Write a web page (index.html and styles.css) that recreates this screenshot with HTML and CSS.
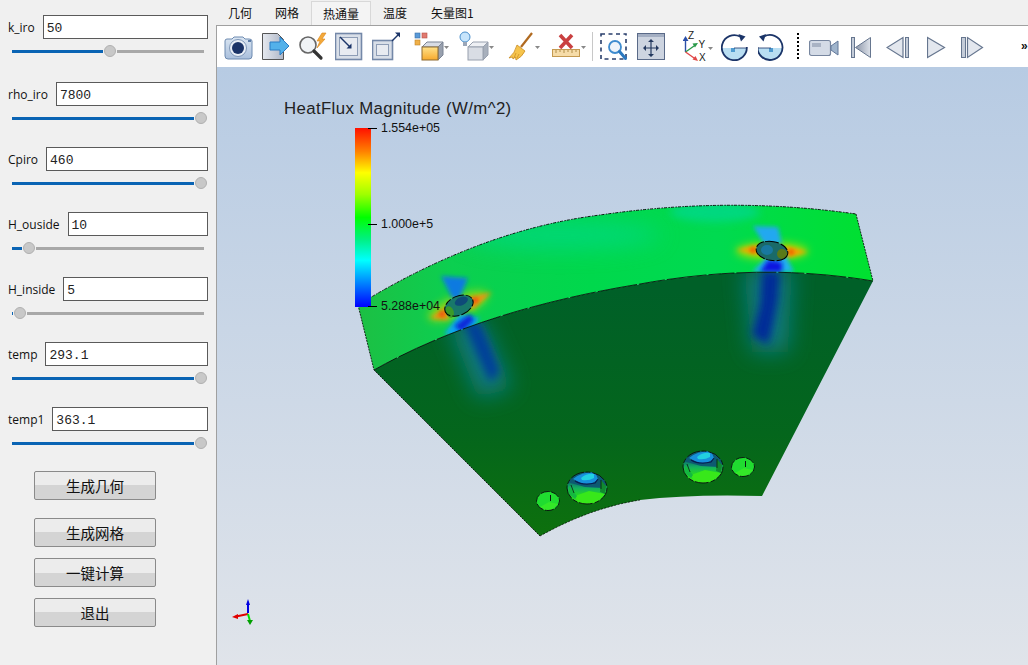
FILE: index.html
```html
<!DOCTYPE html>
<html lang="zh">
<head>
<meta charset="utf-8">
<title>热通量</title>
<link rel="stylesheet" href="styles.css">
</head>
<body>
<div class="app">
  <aside class="panel">
    <div class="group group-first">
      <div class="row"><span class="label">k_iro</span><div class="field">50</div></div>
      <div class="slider"><i class="fill" style="width:91px"></i><i class="thumb"></i><i class="rest"></i></div>
    </div>
    <div class="group">
      <div class="row"><span class="label">rho_iro</span><div class="field">7800</div></div>
      <div class="slider"><i class="fill" style="width:182px"></i><i class="thumb"></i><i class="rest"></i></div>
    </div>
    <div class="group">
      <div class="row"><span class="label">Cpiro</span><div class="field">460</div></div>
      <div class="slider"><i class="fill" style="width:182px"></i><i class="thumb"></i><i class="rest"></i></div>
    </div>
    <div class="group">
      <div class="row"><span class="label">H_ouside</span><div class="field">10</div></div>
      <div class="slider"><i class="fill" style="width:10px"></i><i class="thumb"></i><i class="rest"></i></div>
    </div>
    <div class="group">
      <div class="row"><span class="label">H_inside</span><div class="field">5</div></div>
      <div class="slider"><i class="fill" style="width:1px"></i><i class="thumb"></i><i class="rest"></i></div>
    </div>
    <div class="group">
      <div class="row"><span class="label">temp</span><div class="field">293.1</div></div>
      <div class="slider"><i class="fill" style="width:182px"></i><i class="thumb"></i><i class="rest"></i></div>
    </div>
    <div class="group">
      <div class="row"><span class="label">temp1</span><div class="field">363.1</div></div>
      <div class="slider"><i class="fill" style="width:182px"></i><i class="thumb"></i><i class="rest"></i></div>
    </div>
    <div class="actions">
      <button class="btn btn-wide">生成几何</button>
      <button class="btn">生成网格</button>
      <button class="btn">一键计算</button>
      <button class="btn">退出</button>
    </div>
  </aside>
  <main class="main">
    <nav class="tabs">
      <span class="tab">几何</span>
      <span class="tab">网格</span>
      <span class="tab tab-active">热通量</span>
      <span class="tab">温度</span>
      <span class="tab">矢量图1</span>
    </nav>
    <div class="content">
      <div class="toolbar">
        <svg width="38" height="41" viewBox="0 0 38 41">
          <defs>
            <linearGradient id="gBlue" x1="0" y1="0" x2="0" y2="1"><stop offset="0" stop-color="#dbe6f2"/><stop offset="1" stop-color="#a9bfdc"/></linearGradient>
            <linearGradient id="gGray" x1="0" y1="0" x2="1" y2="0"><stop offset="0" stop-color="#e6e9ef"/><stop offset="1" stop-color="#aeb6c6"/></linearGradient>
            <linearGradient id="gTri" x1="0" y1="0" x2="1" y2="0"><stop offset="0" stop-color="#8d96a8"/><stop offset="1" stop-color="#dde2ea"/></linearGradient>
            <linearGradient id="gOrange" x1="0" y1="0" x2="0" y2="1"><stop offset="0" stop-color="#ffe28a"/><stop offset="1" stop-color="#f7a92c"/></linearGradient>
          </defs>
          <path d="M1 15q0-2 2-2h5l2-2h9l2 2h4q3 0 3 2v15q0 3-3 3H4q-3 0-3-3z" fill="url(#gBlue)" stroke="#6d8ab0"/>
          <circle cx="14" cy="22" r="8.5" fill="#e8eef6" stroke="#7f97b8"/>
          <circle cx="14" cy="22" r="6" fill="#1b3468"/>
          <rect x="24" y="14" width="3" height="2" fill="#5c7ca8"/>
        </svg>
        <svg width="36" height="41" viewBox="0 0 36 41">
          <path d="M.5 7.500h15l6 6v20H.5z" fill="url(#gGray)" stroke="#555"/>
          <path d="M8 16h10v-5l9 9-9 9v-5H8z" fill="#53b1ea" stroke="#2b7cc4"/>
        </svg>
        <svg width="37" height="41" viewBox="0 0 37 41">
          <circle cx="10" cy="19" r="8" fill="#f0f3f6" stroke="#666" stroke-width="1.600"/>
          <path d="M16 25l7 7" stroke="#333" stroke-width="3.200" stroke-linecap="round"/>
          <path d="M24 7l-5 8h3l-3 7 8-9h-3l4-6z" fill="#f4a93a" stroke="#d98518" stroke-width=".6"/>
        </svg>
        <svg width="37" height="41" viewBox="0 0 37 41">
          <rect x=".5" y="7.500" width="26" height="26" fill="#d9dfe8" stroke="#7488a8" stroke-width="1.600"/>
          <rect x="4.500" y="11.500" width="18" height="18" fill="#e8ebf1" stroke="#8e9db6"/>
          <path d="M5 11l10 10" stroke="#1b3468" stroke-width="1.400"/>
          <path d="M16.500 22.500v-5l-5 5z" fill="#1b3468"/>
        </svg>
        <svg width="42" height="41" viewBox="0 0 42 41">
          <rect x=".5" y="14.500" width="20" height="19" fill="#d9dfe8" stroke="#7488a8" stroke-width="1.600"/>
          <rect x="4.500" y="18.500" width="12" height="11" fill="#e8ebf1" stroke="#8e9db6"/>
          <path d="M20 15l6-6" stroke="#1b3468" stroke-width="1.400"/>
          <path d="M28 6.500v5l-5-5z" fill="#1b3468"/>
        </svg>
        <svg width="45" height="41" viewBox="0 0 45 41">
          <rect x="1" y="7" width="5" height="5" fill="#5a9ad8" stroke="#3a70a8" stroke-width=".6"/>
          <rect x="8" y="7" width="5" height="5" fill="#e07a70" stroke="#b85048" stroke-width=".6"/>
          <rect x="1" y="14" width="5" height="5" fill="#f0b048" stroke="#c08428" stroke-width=".6"/>
          <path d="M8 21l5-5h16l-5 5z" fill="#d8dce4" stroke="#7b8494"/>
          <path d="M24 21l5-5v13l-5 5z" fill="#98a0ae" stroke="#7b8494"/>
          <rect x="8" y="21" width="16" height="13" fill="url(#gOrange)" stroke="#8d6a30"/>
          <path d="M30 20h5l-2.500 3z" fill="#888"/>
        </svg>
        <svg width="49" height="41" viewBox="0 0 49 41">
          <circle cx="6" cy="11" r="5" fill="#c6e4fb" stroke="#4a8fcb"/>
          <rect x="4" y="16" width="4" height="4" fill="#9aa6b8"/>
          <path d="M9 21l5-5h15l-5 5z" fill="#eef0f4" stroke="#98a0ae"/>
          <path d="M24 21l5-5v13l-5 5z" fill="#a8b0bc" stroke="#98a0ae"/>
          <rect x="9" y="21" width="15" height="13" fill="#d9dde4" stroke="#98a0ae"/>
          <path d="M30 20h5l-2.500 3z" fill="#888"/>
        </svg>
        <svg width="44" height="41" viewBox="0 0 44 41">
          <path d="M24 7L13 21" stroke="#b06a20" stroke-width="2.200"/>
          <path d="M9 19l8 6q-3 6-9 9l-.5-3-2.500 2-.5-2-3.500 1q6-5 8-13z" fill="#f6c44c" stroke="#c98a1e" stroke-width=".8"/>
          <path d="M8 27l-2 5M11 28l-2 4" stroke="#c98a1e" stroke-width=".7"/>
          <path d="M27 20h5l-2.500 3z" fill="#888"/>
        </svg>
        <svg width="40" height="41" viewBox="0 0 40 41">
          <path d="M8 9l12 13M20 9L8 22" stroke="#c94040" stroke-width="3.600"/>
          <rect x=".5" y="23.500" width="27" height="7" fill="#f6dca8" stroke="#c49a50"/>
          <path d="M4 24v3M8 24v2M12 24v3M16 24v2M20 24v3M24 24v2" stroke="#a07830" stroke-width=".8"/>
          <path d="M29 20h5l-2.500 3z" fill="#888"/>
        </svg>
        <span class="sep"></span>
        <svg width="37" height="41" viewBox="0 0 37 41">
          <rect x="1" y="8" width="25" height="25" fill="none" stroke="#2a3f6c" stroke-width="1.600" stroke-dasharray="4 3.500"/>
          <circle cx="15" cy="21" r="6" fill="#eef4fa" stroke="#3f8ccf" stroke-width="1.800"/>
          <path d="M19.500 25.500l6 7" stroke="#2a78c0" stroke-width="3" stroke-linecap="round"/>
        </svg>
        <svg width="46" height="41" viewBox="0 0 46 41">
          <rect x=".5" y="7.500" width="27" height="26" fill="#cdd4e0" stroke="#5a6a88"/>
          <rect x="1" y="8" width="26" height="3" fill="#a3aec2"/>
          <path d="M14 15v14M8 22h12" stroke="#24395f" stroke-width="1.200"/>
          <path d="M14 13l-3 3h6zM14 31l-3-3h6zM6 22l3-3v6zM22 22l-3-3v6z" fill="#24395f"/>
        </svg>
        <svg width="38" height="41" viewBox="0 0 38 41">
          <path d="M2.500 26V14" stroke="#2a4fa8" stroke-width="1.400"/>
          <path d="M2.500 10l-3 5h6z" fill="#2a4fa8"/>
          <path d="M2.500 26l10-7" stroke="#2a9a48" stroke-width="1.400"/>
          <path d="M15 17l-5.500.5 2.500 4z" fill="#2a9a48"/>
          <path d="M2.500 26l10 7" stroke="#e04848" stroke-width="1.400"/>
          <path d="M15 35l-2.500-5-3 3.500z" fill="#e04848"/>
          <text class="axis-letter" x="5" y="13">Z</text>
          <text class="axis-letter" x="15.500" y="22">Y</text>
          <text class="axis-letter" x="16" y="35">X</text>
          <path d="M25 21h5l-2.500 3z" fill="#888"/>
        </svg>
        <svg width="37" height="41" viewBox="0 0 37 41">
          <path d="M1 22h25a12.500 12.500 0 0 1-25 0z" fill="#b9def2"/>
          <rect x="10" y="22" width="4" height="4" fill="#4f9bd0"/>
          <path d="M19 10.500A12.500 12.500 0 1 0 25.800 21" fill="none" stroke="#1b3468" stroke-width="1.800"/>
          <path d="M17.500 8l7 2.500-4.500 5z" fill="#1b3468"/>
          <path d="M13 22h13" stroke="#1b3468" stroke-width=".8"/>
        </svg>
        <svg width="39" height="41" viewBox="0 0 39 41">
          <path d="M25 22H0a12.500 12.500 0 0 0 25 0z" fill="#b9def2"/>
          <rect x="11" y="22" width="4" height="4" fill="#4f9bd0"/>
          <path d="M6 10.500A12.500 12.500 0 1 1 -.5 21" fill="none" stroke="#1b3468" stroke-width="1.800"/>
          <path d="M8 8L1 10.500l4.500 5z" fill="#1b3468"/>
          <path d="M0 22h13" stroke="#1b3468" stroke-width=".8"/>
        </svg>
        <span class="dots"></span>
        <svg width="42" height="41" viewBox="0 0 42 41">
          <rect x=".5" y="14.500" width="21" height="15" rx="2" fill="#d4dbe6" stroke="#77869f" stroke-width="1.200"/>
          <rect x="3" y="17" width="9" height="4" fill="#a9b3c4"/>
          <path d="M22 20l7-5v14l-7-5z" fill="#9fb4cc" stroke="#62789a"/>
        </svg>
        <svg width="35" height="41" viewBox="0 0 35 41">
          <rect x=".5" y="11.500" width="3" height="20" fill="#c4ccd8" stroke="#66768f"/>
          <path d="M19.500 11.500v20l-15-10z" fill="url(#gTri)" stroke="#66768f"/>
        </svg>
        <svg width="41" height="41" viewBox="0 0 41 41">
          <path d="M17 11.500v20l-16-10z" fill="#e3e7ee" stroke="#66768f" stroke-width="1.200"/>
          <rect x="19.500" y="11.500" width="3" height="20" fill="#c4ccd8" stroke="#66768f"/>
        </svg>
        <svg width="34" height="41" viewBox="0 0 34 41">
          <path d="M.5 11.500v20l17-10z" fill="#e3e7ee" stroke="#66768f" stroke-width="1.200"/>
        </svg>
        <svg width="60" height="41" viewBox="0 0 60 41">
          <rect x=".5" y="11.500" width="4" height="20" fill="#c4ccd8" stroke="#66768f"/>
          <path d="M6.500 11.500v20l15-10z" fill="#e3e7ee" stroke="#66768f" stroke-width="1.200"/>
        </svg>
        <span class="more">»</span>
      </div>
      <div class="viewport">
        <svg class="scene" viewBox="217 67 811 598" width="811" height="598">
          <defs>
            <linearGradient id="rainbow" x1="0" y1="0" x2="0" y2="1">
              <stop offset="0" stop-color="#ff1000"/><stop offset=".13" stop-color="#ff8000"/><stop offset=".25" stop-color="#ffff00"/>
              <stop offset=".37" stop-color="#a0ff00"/><stop offset=".5" stop-color="#00ff00"/><stop offset=".62" stop-color="#00f080"/>
              <stop offset=".74" stop-color="#00ffff"/><stop offset=".87" stop-color="#0080ff"/><stop offset="1" stop-color="#0000ff"/>
            </linearGradient>
            <linearGradient id="band" gradientUnits="userSpaceOnUse" x1="360" y1="0" x2="870" y2="0">
              <stop offset="0" stop-color="#1cc044"/><stop offset=".18" stop-color="#0ccf50"/><stop offset=".45" stop-color="#00d84c"/>
              <stop offset=".7" stop-color="#00da50"/><stop offset="1" stop-color="#00e030"/>
            </linearGradient>
            <linearGradient id="face" gradientUnits="userSpaceOnUse" x1="0" y1="290" x2="0" y2="530">
              <stop offset="0" stop-color="#006028"/><stop offset=".6" stop-color="#04661c"/><stop offset="1" stop-color="#0d700e"/>
            </linearGradient>
            <linearGradient id="holeBody" x1="0" y1="0" x2="0" y2="1">
              <stop offset="0" stop-color="#0f5f6a"/><stop offset=".36" stop-color="#0f7f6a"/><stop offset=".5" stop-color="#14b060"/><stop offset=".68" stop-color="#20d030"/><stop offset="1" stop-color="#3ae814"/>
            </linearGradient>
            <clipPath id="clipBand"><path d="M358 305Q480 230 600 215Q730 196 856 214L873 281Q760 262 640 284Q480 310 374 370z"/></clipPath>
            <clipPath id="clipFace"><path d="M374 370Q480 310 640 284Q760 262 873 281L762 496Q690 494 640 500Q590 508 540 536z"/></clipPath>
            <clipPath id="clipHole"><ellipse cx="0" cy="0" rx="20" ry="16"/></clipPath>
            <filter id="b2" x="-100%" y="-100%" width="300%" height="300%"><feGaussianBlur stdDeviation="2"/></filter>
            <filter id="b3" x="-100%" y="-100%" width="300%" height="300%"><feGaussianBlur stdDeviation="3"/></filter>
            <filter id="b4" x="-100%" y="-100%" width="300%" height="300%"><feGaussianBlur stdDeviation="4"/></filter>
            <filter id="b12" x="-100%" y="-100%" width="300%" height="300%"><feGaussianBlur stdDeviation="11"/></filter>
            <g id="bigHole">
              <ellipse rx="20" ry="16" fill="url(#holeBody)"/>
              <g clip-path="url(#clipHole)">
                <path d="M-20 -6L-14 -16H16L20 -4 16 0 -2 -1z" fill="#0d5a72"/>
                <path d="M-14 -9Q-6 -16 8 -16L11 -9Q6 -3 -4 -4z" fill="#1790dc"/>
                <path d="M-6 -10Q0 -15 7 -14L7 -10Q2 -7 -5 -8z" fill="#22d0e0"/>
                <path d="M-12 -7Q-4 -2 8 -5L11 -9" fill="none" stroke="#081c50" stroke-width="1.200"/>
                <path d="M-12 8L2 3 18 6 8 16H-8z" fill="#38e81a"/>
                <path d="M-18 -2L-10 8-12 11-18 6z" fill="#14b840"/>
                <path d="M14 -8L19 -2 18 6 13 4z" fill="#118a30"/>
              </g>
              <ellipse rx="20" ry="16" fill="none" stroke="#0a1a10" stroke-dasharray="14 1.500 5 2"/>
              <path d="M-16 -3l3 8M14 -8v9" fill="none" stroke="#0a1a10" stroke-width=".8"/>
            </g>
            <g id="smallHole">
              <ellipse rx="11.500" ry="9.500" fill="#20dc30"/>
              <path d="M-8 6L1 1 10 3 4 9H-4z" fill="#34e828"/>
              <ellipse rx="11.500" ry="9.500" fill="none" stroke="#0a1a10" stroke-dasharray="9 1.500"/>
              <path d="M2.500 -6v6" stroke="#0a1a10"/>
            </g>
          </defs>
          <path d="M374 370Q480 310 640 284Q760 262 873 281L762 496Q690 494 640 500Q590 508 540 536z" fill="url(#face)"/>
          <g clip-path="url(#clipFace)">
            <path d="M448 322L482 320 512 388 478 398z" fill="#0a7a80" filter="url(#b12)"/>
            <path d="M463 322L480 322 490 345 500 372 490 382 475 350z" fill="#06409a" filter="url(#b4)"/>
            <path d="M744 270L792 268 788 352 752 352z" fill="#0a7a80" filter="url(#b12)"/>
            <path d="M762 270L780 272 778 300 772 330 768 345 752 335 760 305z" fill="#042c98" filter="url(#b4)"/>
          </g>
          <path d="M358 305Q480 230 600 215Q730 196 856 214L873 281Q760 262 640 284Q480 310 374 370z" fill="url(#band)"/>
          <g clip-path="url(#clipBand)">
            <ellipse cx="560" cy="235" rx="100" ry="15" fill="#00d880" filter="url(#b12)" opacity=".8"/>
            <ellipse cx="715" cy="212" rx="45" ry="10" fill="#00d88c" filter="url(#b4)" opacity=".8"/>
            <ellipse cx="458" cy="306" rx="32" ry="10" fill="#8cd818" filter="url(#b4)" transform="rotate(-22 458 306)"/>
            <ellipse cx="772" cy="251" rx="36" ry="8" fill="#a8e000" filter="url(#b4)"/>
            <path d="M430 318L448 306 448 320z" fill="#f09010" filter="url(#b2)"/>
            <path d="M492 292L468 298 472 310z" fill="#f09010" filter="url(#b2)"/>
            <circle cx="442" cy="314" r="2.500" fill="#e83808" filter="url(#b2)"/>
            <circle cx="475" cy="300" r="2.500" fill="#e83808" filter="url(#b2)"/>
            <path d="M736 250L758 245 758 255z" fill="#f8a000" filter="url(#b2)"/>
            <path d="M808 252L786 246 786 258z" fill="#f8a000" filter="url(#b2)"/>
            <circle cx="753" cy="250" r="2.500" fill="#e84000" filter="url(#b2)"/>
            <circle cx="791" cy="252" r="2.500" fill="#e84000" filter="url(#b2)"/>
            <path d="M441 276L468 278 459 300 452 298z" fill="#107ae0" filter="url(#b2)"/>
            <path d="M444 334L460 314 480 318 466 338z" fill="#10a8f0" filter="url(#b2)"/>
            <path d="M454 326L470 314 474 320 462 332z" fill="#0828d8" filter="url(#b2)"/>
            <path d="M753 226L778 227 782 244 764 244z" fill="#20a8f0" filter="url(#b2)"/>
            <path d="M752 272L768 256 786 256 794 272z" fill="#20b0f0" filter="url(#b2)"/>
            <path d="M760 272L768 260 782 262 782 272z" fill="#0818e0" filter="url(#b2)"/>
          </g>
          <g transform="rotate(-24 458 306)">
            <ellipse cx="459" cy="306" rx="15" ry="9.500" fill="#18786a"/>
            <ellipse cx="448" cy="308" rx="4" ry="6" fill="#3a9a28"/>
            <ellipse cx="463" cy="303" rx="7" ry="4" fill="#0e4a78"/>
            <ellipse cx="459" cy="306" rx="15" ry="9.500" fill="none" stroke="#000" stroke-dasharray="7 2 12 2"/>
          </g>
          <ellipse cx="772" cy="251" rx="16" ry="9.500" fill="#1a6a68" transform="rotate(10 772 251)"/>
          <ellipse cx="767" cy="250" rx="6" ry="5" fill="#1878a0"/>
          <ellipse cx="782" cy="254" rx="5" ry="5" fill="#5a7a18"/>
          <ellipse cx="772" cy="251" rx="16" ry="9.500" fill="none" stroke="#000" stroke-dasharray="14 2 9 1" transform="rotate(10 772 251)"/>
          <path d="M358 305Q480 230 600 215Q730 196 856 214" fill="none" stroke="#000" stroke-width=".9" stroke-dasharray="1.500 1 3 1.500"/>
          <path d="M374 370Q480 310 640 284Q760 262 873 281" fill="none" stroke="#000" stroke-width=".8" stroke-dasharray="26 2 40 2"/>
          <path d="M856 214L873 281M358 305L374 370L540 536" fill="none" stroke="#000" stroke-width=".8" stroke-dasharray="2 1"/>
          <path d="M540 536Q590 508 640 500" fill="none" stroke="#000" stroke-width=".7" stroke-dasharray="2 1.500"/>
          <use href="#bigHole" x="587" y="488"/>
          <use href="#bigHole" x="703" y="467"/>
          <use href="#smallHole" x="548" y="501"/>
          <use href="#smallHole" x="743" y="467"/>
          <rect x="355" y="128" width="16" height="179" fill="url(#rainbow)"/>
          <path d="M368 128.500h9M368 224.500h9M368 306.500h9" stroke="#000"/>
          <text class="bar-title" x="284" y="114">HeatFlux Magnitude (W/m^2)</text>
          <text class="bar-label" x="381" y="132">1.554e+05</text>
          <text class="bar-label" x="381" y="228">1.000e+5</text>
          <text class="bar-label" x="381" y="310">5.288e+04</text>
          <path d="M248 613V603" stroke="#0000e0" stroke-width="2"/>
          <path d="M248 599l-2 6h4z" fill="#0000e0"/>
          <path d="M248 614l-12 2.500" stroke="#e00000" stroke-width="2"/>
          <path d="M232 617l6-3v5z" fill="#e00000"/>
          <path d="M248 614l2 7" stroke="#00e000" stroke-width="2"/>
          <path d="M250 625l-3-5h6z" fill="#00a000"/>
        </svg>
      </div>
    </div>
  </main>
</div>
</body>
</html>
```
FILE: styles.css
```css
html, body { margin: 0; padding: 0; height: 100%; overflow: hidden; background: #f0f0f0; }
.app { display: flex; width: 1028px; height: 665px; }
.panel { width: 216px; flex: none; box-sizing: border-box; padding: 15px 8px 0 8px; }
.group { margin-top: 22px; }
.group-first { margin-top: 0; margin-bottom: 24px; }
.row { display: flex; align-items: center; gap: 8px; height: 24px; }
.label { font: 12px "Open Sans", "Liberation Sans", sans-serif; color: #111; flex: none; }
.field { flex: 1; height: 24px; box-sizing: border-box; border: 1px solid #5a5a5a; background: #fff; padding: 4px 0 0 3px; font: 13px/18px "Liberation Mono", monospace; color: #222; }
.slider { display: flex; align-items: center; width: 192px; height: 14px; margin: 5px 0 0 4px; }
.fill { display: block; height: 3px; flex: none; background: #0a64b4; }
.thumb { display: block; width: 12px; height: 12px; margin: 0 1px; flex: none; box-sizing: border-box; border-radius: 50%; background: #c8c8c8; border: 1px solid #b0b0b0; }
.rest { display: block; height: 3px; flex: 1; min-width: 0; background: #a8a8a8; }
.actions { display: flex; flex-direction: column; align-items: flex-start; gap: 11px; margin: 21px 0 0 26px; }
.btn { width: 122px; height: 29px; padding: 0; border: 1px solid #8a8a8a; border-radius: 2px; background: linear-gradient(#ececec 0, #ececec 50%, #d4d4d4 50%, #d4d4d4 100%); font: 14.500px "Noto Sans CJK SC", sans-serif; color: #111; }
.btn-wide { margin-bottom: 7px; }
.main { flex: 1; display: flex; flex-direction: column; min-width: 0; }
.tabs { display: flex; height: 25px; box-sizing: border-box; padding-top: 1px; }
.tab { padding: 0 12px; font: 12px/24px "Noto Sans CJK SC", sans-serif; color: #111; box-sizing: border-box; }
.tab:first-child { padding-right: 11px; }
.tab-active { background: #f4f4f4; border: 1px solid #d8d8d8; border-bottom: 0; padding: 0 11px; }
.content { flex: 1; display: flex; flex-direction: column; min-height: 0; border-left: 1px solid #a0a0a0; border-top: 1px solid #a0a0a0; }
.toolbar { display: flex; align-items: flex-start; height: 41px; flex: none; background: #fff; padding-left: 7px; box-sizing: border-box; }
.toolbar svg { flex: none; display: block; }
.axis-letter { font: 10px "Liberation Sans", sans-serif; fill: #222; }
.sep { width: 1px; height: 29px; margin: 6px 7px 0 0; background: #c8c8c8; flex: none; }
.dots { width: 2px; height: 27px; margin: 7px 10px 0 0; flex: none; background: repeating-linear-gradient(#000 0, #000 2px, transparent 2px, transparent 4px); }
.more { font: bold 12px/40px "Liberation Sans", sans-serif; color: #111; white-space: nowrap; }
.viewport { flex: 1; min-height: 0; background: linear-gradient(#b7cbe3, #e0e4ea); }
.scene { display: block; }
.bar-title { font: 16.800px "Liberation Sans", sans-serif; letter-spacing: .38px; fill: #222; }
.bar-label { font: 12.400px "Liberation Sans", sans-serif; fill: #111; }
```
